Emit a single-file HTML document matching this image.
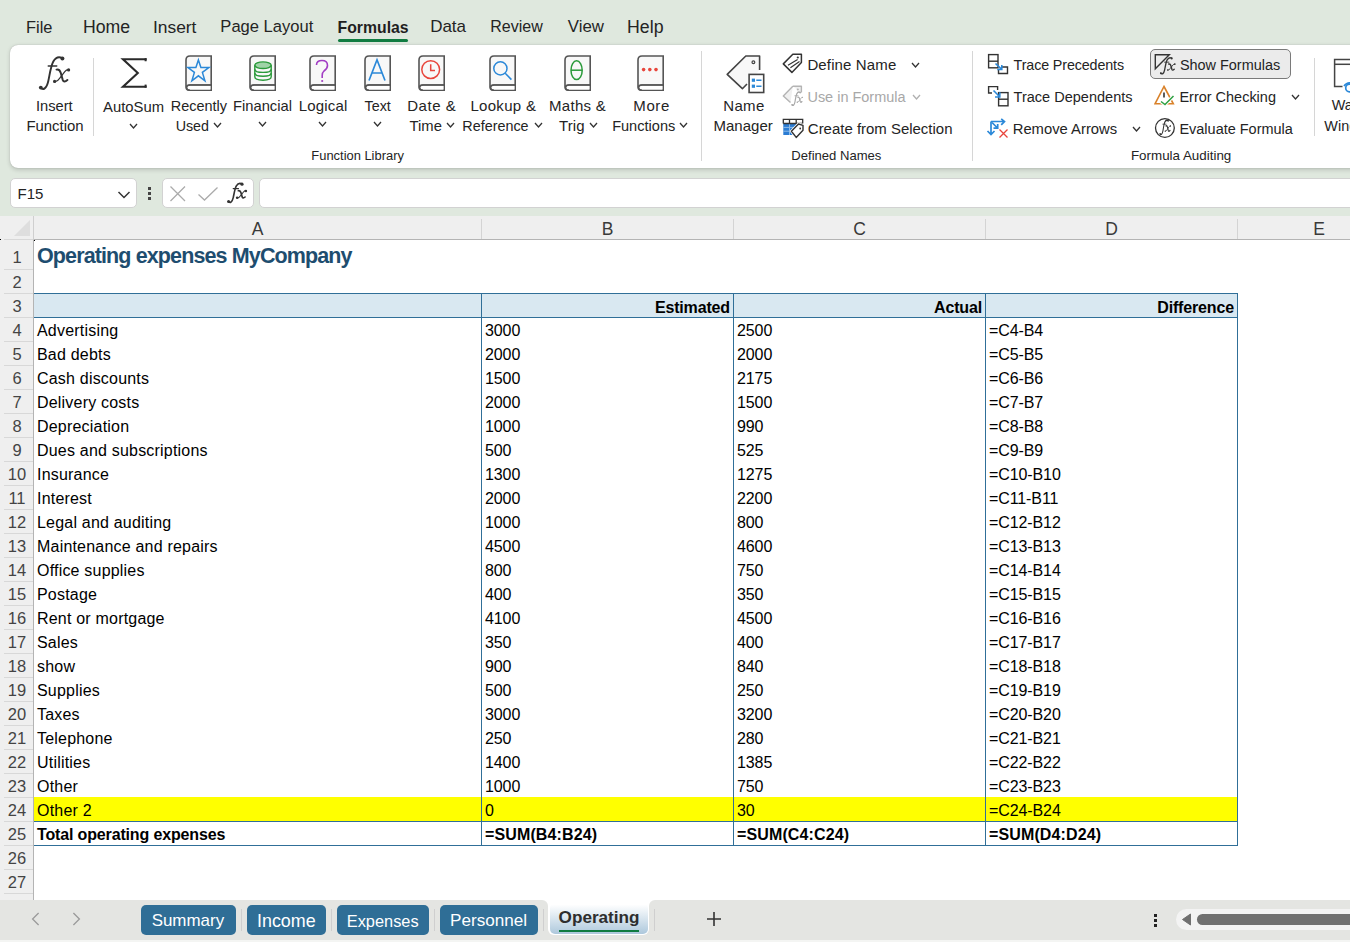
<!DOCTYPE html>
<html><head><meta charset="utf-8"><style>
*{box-sizing:border-box;margin:0;padding:0}
html,body{width:1350px;height:942px;overflow:hidden}
body{position:relative;background:#dfe8de;font-family:"Liberation Sans",sans-serif;color:#242424}
.a{position:absolute;white-space:nowrap}
.menu{position:absolute;top:18px;font-size:16.3px;color:#242424;line-height:18px;white-space:nowrap}
.ribbon{position:absolute;left:10px;top:45px;width:1400px;height:123px;background:#fff;border-radius:8px;box-shadow:0 0 1px rgba(0,0,0,.25),0 1.5px 4px rgba(0,0,0,.16)}
.rt{position:absolute;font-size:14.5px;line-height:20px;color:#242424;text-align:center;white-space:nowrap}
.gl{position:absolute;font-size:12.8px;color:#242424;line-height:14px;white-space:nowrap}
.sep{position:absolute;width:1px;background:#d6d6d6}
.st{position:absolute;font-size:14.5px;line-height:16px;color:#242424;white-space:nowrap}
#fbar{position:absolute;left:0;top:168px;width:1350px;height:48px;background:#dfe8de}
.box{position:absolute;background:#fff;border:1px solid #d2d2d2;border-radius:5px}
#colhdr{position:absolute;left:0;top:216px;width:1350px;height:24px;background:#efefef}
#colhdrline{position:absolute;left:33px;top:239px;width:1317px;height:1px;background:#b4b4b4}
#rowhdr{position:absolute;left:0;top:240px;width:34px;height:660px;background:#efefef;border-right:1px solid #b4b4b4}
.ch{position:absolute;top:217px;height:22px;font-size:17.5px;line-height:24px;color:#3a3a3a;text-align:center}
.cs{position:absolute;top:219px;width:1px;height:20px;background:#d4d4d4}
.rh{position:absolute;left:0;width:33px;font-size:16.5px;color:#444;text-align:center;padding-left:1px}
.rs{position:absolute;left:4px;width:29px;height:1px;background:#d8d8d8}
#grid{position:absolute;left:34px;top:240px;width:1316px;height:660px;background:#fff}
.c{position:absolute;font-size:16px;line-height:24px;color:#000;white-space:nowrap;letter-spacing:0.2px}
.b{font-weight:700;letter-spacing:-0.15px}
.n{letter-spacing:-0.1px}
#tabs{position:absolute;left:0;top:900px;width:1350px;height:40px;background:#e4e5e2}
.tab{position:absolute;top:905px;height:30px;background:#2f6e96;color:#fff;border-radius:5px;font-size:16.7px;line-height:30px;text-align:center;white-space:nowrap}

</style></head><body>
<div style="position:absolute;left:26.09px;top:17.32px;font-size:16.38px;letter-spacing:0.000px;line-height:20px;color:#242424;font-weight:400;white-space:nowrap">File</div>
<div style="position:absolute;left:82.99px;top:16.87px;font-size:17.68px;letter-spacing:0.000px;line-height:20px;color:#242424;font-weight:400;white-space:nowrap">Home</div>
<div style="position:absolute;left:152.93px;top:16.96px;font-size:17.42px;letter-spacing:0.000px;line-height:20px;color:#242424;font-weight:400;white-space:nowrap">Insert</div>
<div style="position:absolute;left:220.37px;top:17.26px;font-size:16.56px;letter-spacing:0.000px;line-height:20px;color:#242424;font-weight:400;white-space:nowrap">Page Layout</div>
<div style="position:absolute;left:430.14px;top:17.11px;font-size:17.00px;letter-spacing:0.000px;line-height:20px;color:#242424;font-weight:400;white-space:nowrap">Data</div>
<div style="position:absolute;left:490.22px;top:17.45px;font-size:16.00px;letter-spacing:0.000px;line-height:20px;color:#242424;font-weight:400;white-space:nowrap">Review</div>
<div style="position:absolute;left:567.83px;top:17.17px;font-size:16.82px;letter-spacing:0.000px;line-height:20px;color:#242424;font-weight:400;white-space:nowrap">View</div>
<div style="position:absolute;left:627.08px;top:16.85px;font-size:17.72px;letter-spacing:0.000px;line-height:20px;color:#242424;font-weight:400;white-space:nowrap">Help</div>
<div style="position:absolute;left:337.59px;top:17.83px;font-size:15.79px;letter-spacing:0.000px;line-height:20px;color:#1f1f1f;font-weight:700;white-space:nowrap">Formulas</div>
<div style="position:absolute;left:338px;top:39px;width:70px;height:3px;background:#107c41;border-radius:2px"></div>
<div class="ribbon"></div>
<svg style="position:absolute;left:35px;top:50px" width="40" height="45"><g fill="none" stroke="#333" stroke-linecap="round"><path d="M5.5 37.6 C8 40.5, 11.5 39, 13.3 31 C14.8 24, 15.8 16, 18.3 11.5 C20.3 8, 23.5 6.2, 27.2 8" stroke-width="1.9"/><path d="M13.2 16 H21.8" stroke-width="1.3"/><path d="M21.5 19.6 Q24.6 18.8, 25.8 23 L27.7 29.8 Q29 33.2, 32.4 30" stroke-width="2"/><path d="M19.6 31.6 Q22 32.2, 24.6 28.4 L29.8 21.6 Q31.6 19.4, 33.8 19.7" stroke-width="1.2"/></g><g fill="#333"><circle cx="5.8" cy="37.6" r="1.9"/><circle cx="27.4" cy="8.6" r="2"/><circle cx="19.6" cy="31.4" r="1.6"/><circle cx="33.6" cy="19.9" r="1.6"/></g></svg>
<div style="position:absolute;left:35.98px;top:95.91px;font-size:14.67px;letter-spacing:0.000px;line-height:20px;color:#242424;font-weight:400;white-space:nowrap">Insert</div>
<div style="position:absolute;left:26.41px;top:115.52px;font-size:14.93px;letter-spacing:0.000px;line-height:20px;color:#242424;font-weight:400;white-space:nowrap">Function</div>
<div class="sep" style="left:93px;top:58px;height:78px"></div>
<svg style="position:absolute;left:120px;top:57px" width="29" height="33"><path d="M26.6 2.2 H3 L17.8 16 L3 29.7 H26.6" fill="none" stroke="#2a2a2a" stroke-width="2.1" stroke-linejoin="miter" stroke-miterlimit="10"/><rect x="24.6" y="1.15" width="2" height="3.1" fill="#2a2a2a"/><rect x="24.6" y="27.6" width="2" height="3.1" fill="#2a2a2a"/></svg>
<div style="position:absolute;left:103.10px;top:96.85px;font-size:14.84px;letter-spacing:0.000px;line-height:20px;color:#242424;font-weight:400;white-space:nowrap">AutoSum</div>
<svg style="position:absolute;left:129px;top:123px" width="9" height="6"><path d="M1 1 L4.5 5 L8 1" fill="none" stroke="#333" stroke-width="1.3"/></svg>
<svg style="position:absolute;left:185px;top:55px" width="28" height="37" viewBox="0 0 28 37"><path d="M26.2 1 H5 Q1 1 1 5 V31.5 Q1 35.3 5 35.3 H26.2 Z" fill="#f8f8f8" stroke="#555" stroke-width="1.6"/><path d="M26.2 30 H5 Q1.5 30 1.5 32.7" fill="none" stroke="#555" stroke-width="1.6"/><rect x="1.8" y="30.8" width="23.6" height="3.7" fill="#fff"/><path d="M26.2 30 H5 Q1.6 30 1.6 32.6 Q1.6 35.3 5 35.3" fill="none" stroke="#555" stroke-width="1.6"/><path d="M13.4 5 L15.9 12.6 L23.9 12.6 L17.4 17.4 L19.9 25.8 L13.4 20.8 L6.9 25.8 L9.4 17.4 L2.9 12.6 L10.9 12.6 Z" fill="none" stroke="#2b88d8" stroke-width="1.5" stroke-linejoin="miter"/></svg>
<div style="position:absolute;left:170.74px;top:95.98px;font-size:14.46px;letter-spacing:0.000px;line-height:20px;color:#242424;font-weight:400;white-space:nowrap">Recently</div>
<div style="position:absolute;left:175.76px;top:115.74px;font-size:14.30px;letter-spacing:-0.072px;line-height:20px;color:#242424;font-weight:400;white-space:nowrap">Used</div>
<svg style="position:absolute;left:213px;top:121.6px" width="9" height="6"><path d="M1 1 L4.5 5 L8 1" fill="none" stroke="#333" stroke-width="1.3"/></svg>
<svg style="position:absolute;left:249px;top:55px" width="28" height="37" viewBox="0 0 28 37"><path d="M26.2 1 H5 Q1 1 1 5 V31.5 Q1 35.3 5 35.3 H26.2 Z" fill="#f8f8f8" stroke="#555" stroke-width="1.6"/><path d="M26.2 30 H5 Q1.5 30 1.5 32.7" fill="none" stroke="#555" stroke-width="1.6"/><rect x="1.8" y="30.8" width="23.6" height="3.7" fill="#fff"/><path d="M26.2 30 H5 Q1.6 30 1.6 32.6 Q1.6 35.3 5 35.3" fill="none" stroke="#555" stroke-width="1.6"/><g fill="none" stroke="#2a9a3a" stroke-width="1.4"><ellipse cx="14" cy="10.2" rx="8.2" ry="3.3" fill="#9fd3a7"/><path d="M5.8 10.2 V21.8 Q5.8 25.2 14 25.2 Q22.2 25.2 22.2 21.8 V10.2"/><path d="M5.8 14.2 Q5.8 17.4 14 17.4 Q22.2 17.4 22.2 14.2"/><path d="M5.8 18.1 Q5.8 21.3 14 21.3 Q22.2 21.3 22.2 18.1"/></g></svg>
<div style="position:absolute;left:233.02px;top:95.89px;font-size:14.74px;letter-spacing:0.000px;line-height:20px;color:#242424;font-weight:400;white-space:nowrap">Financial</div>
<svg style="position:absolute;left:258px;top:121.3px" width="9" height="6"><path d="M1 1 L4.5 5 L8 1" fill="none" stroke="#333" stroke-width="1.3"/></svg>
<svg style="position:absolute;left:309px;top:55px" width="28" height="37" viewBox="0 0 28 37"><path d="M26.2 1 H5 Q1 1 1 5 V31.5 Q1 35.3 5 35.3 H26.2 Z" fill="#f8f8f8" stroke="#555" stroke-width="1.6"/><path d="M26.2 30 H5 Q1.5 30 1.5 32.7" fill="none" stroke="#555" stroke-width="1.6"/><rect x="1.8" y="30.8" width="23.6" height="3.7" fill="#fff"/><path d="M26.2 30 H5 Q1.6 30 1.6 32.6 Q1.6 35.3 5 35.3" fill="none" stroke="#555" stroke-width="1.6"/><path d="M7.5 10 Q7.5 5.5 13 5.5 Q18.5 5.5 18.5 10.5 Q18.5 13.5 15 16 Q13.2 17.5 13.2 20.5 V23" fill="none" stroke="#a23ec4" stroke-width="1.6"/><circle cx="13.2" cy="26" r="1.1" fill="#a23ec4"/></svg>
<div style="position:absolute;left:298.80px;top:95.80px;font-size:15.00px;letter-spacing:0.150px;line-height:20px;color:#242424;font-weight:400;white-space:nowrap">Logical</div>
<svg style="position:absolute;left:318px;top:121.3px" width="9" height="6"><path d="M1 1 L4.5 5 L8 1" fill="none" stroke="#333" stroke-width="1.3"/></svg>
<svg style="position:absolute;left:364px;top:55px" width="28" height="37" viewBox="0 0 28 37"><path d="M26.2 1 H5 Q1 1 1 5 V31.5 Q1 35.3 5 35.3 H26.2 Z" fill="#f8f8f8" stroke="#555" stroke-width="1.6"/><path d="M26.2 30 H5 Q1.5 30 1.5 32.7" fill="none" stroke="#555" stroke-width="1.6"/><rect x="1.8" y="30.8" width="23.6" height="3.7" fill="#fff"/><path d="M26.2 30 H5 Q1.6 30 1.6 32.6 Q1.6 35.3 5 35.3" fill="none" stroke="#555" stroke-width="1.6"/><path d="M5 25.5 L13 4.8 L21 25.5 M8 18 H18" fill="none" stroke="#2b88d8" stroke-width="1.7"/></svg>
<div style="position:absolute;left:364.61px;top:96.04px;font-size:14.30px;letter-spacing:-0.028px;line-height:20px;color:#242424;font-weight:400;white-space:nowrap">Text</div>
<svg style="position:absolute;left:373px;top:121.3px" width="9" height="6"><path d="M1 1 L4.5 5 L8 1" fill="none" stroke="#333" stroke-width="1.3"/></svg>
<svg style="position:absolute;left:418px;top:55px" width="28" height="37" viewBox="0 0 28 37"><path d="M26.2 1 H5 Q1 1 1 5 V31.5 Q1 35.3 5 35.3 H26.2 Z" fill="#f8f8f8" stroke="#555" stroke-width="1.6"/><path d="M26.2 30 H5 Q1.5 30 1.5 32.7" fill="none" stroke="#555" stroke-width="1.6"/><rect x="1.8" y="30.8" width="23.6" height="3.7" fill="#fff"/><path d="M26.2 30 H5 Q1.6 30 1.6 32.6 Q1.6 35.3 5 35.3" fill="none" stroke="#555" stroke-width="1.6"/><circle cx="12.7" cy="14.6" r="8.9" fill="none" stroke="#e8453c" stroke-width="1.5"/><path d="M12.7 9.2 V15.5 H17" fill="none" stroke="#e8453c" stroke-width="1.5"/></svg>
<div style="position:absolute;left:407.20px;top:95.80px;font-size:15.00px;letter-spacing:0.560px;line-height:20px;color:#242424;font-weight:400;white-space:nowrap">Date &amp;</div>
<div style="position:absolute;left:409.60px;top:115.56px;font-size:14.81px;letter-spacing:0.000px;line-height:20px;color:#242424;font-weight:400;white-space:nowrap">Time</div>
<svg style="position:absolute;left:446px;top:121.6px" width="9" height="6"><path d="M1 1 L4.5 5 L8 1" fill="none" stroke="#333" stroke-width="1.3"/></svg>
<svg style="position:absolute;left:489px;top:55px" width="28" height="37" viewBox="0 0 28 37"><path d="M26.2 1 H5 Q1 1 1 5 V31.5 Q1 35.3 5 35.3 H26.2 Z" fill="#f8f8f8" stroke="#555" stroke-width="1.6"/><path d="M26.2 30 H5 Q1.5 30 1.5 32.7" fill="none" stroke="#555" stroke-width="1.6"/><rect x="1.8" y="30.8" width="23.6" height="3.7" fill="#fff"/><path d="M26.2 30 H5 Q1.6 30 1.6 32.6 Q1.6 35.3 5 35.3" fill="none" stroke="#555" stroke-width="1.6"/><circle cx="11.4" cy="13.4" r="6.6" fill="none" stroke="#2b88d8" stroke-width="1.5"/><path d="M16.2 18.2 L22.4 24.6" stroke="#2b88d8" stroke-width="1.6"/></svg>
<div style="position:absolute;left:470.40px;top:95.80px;font-size:15.00px;letter-spacing:0.307px;line-height:20px;color:#242424;font-weight:400;white-space:nowrap">Lookup &amp;</div>
<div style="position:absolute;left:462.35px;top:115.72px;font-size:14.37px;letter-spacing:0.000px;line-height:20px;color:#242424;font-weight:400;white-space:nowrap">Reference</div>
<svg style="position:absolute;left:534px;top:121.6px" width="9" height="6"><path d="M1 1 L4.5 5 L8 1" fill="none" stroke="#333" stroke-width="1.3"/></svg>
<svg style="position:absolute;left:564px;top:55px" width="28" height="37" viewBox="0 0 28 37"><path d="M26.2 1 H5 Q1 1 1 5 V31.5 Q1 35.3 5 35.3 H26.2 Z" fill="#f8f8f8" stroke="#555" stroke-width="1.6"/><path d="M26.2 30 H5 Q1.5 30 1.5 32.7" fill="none" stroke="#555" stroke-width="1.6"/><rect x="1.8" y="30.8" width="23.6" height="3.7" fill="#fff"/><path d="M26.2 30 H5 Q1.6 30 1.6 32.6 Q1.6 35.3 5 35.3" fill="none" stroke="#555" stroke-width="1.6"/><ellipse cx="12.6" cy="15.2" rx="5.6" ry="9.4" fill="none" stroke="#2a9a3a" stroke-width="1.5"/><path d="M7 15.2 H18.2" stroke="#2a9a3a" stroke-width="1.5"/></svg>
<div style="position:absolute;left:549.00px;top:95.80px;font-size:15.00px;letter-spacing:0.308px;line-height:20px;color:#242424;font-weight:400;white-space:nowrap">Maths &amp;</div>
<div style="position:absolute;left:559.10px;top:115.50px;font-size:15.00px;letter-spacing:0.033px;line-height:20px;color:#242424;font-weight:400;white-space:nowrap">Trig</div>
<svg style="position:absolute;left:589px;top:121.6px" width="9" height="6"><path d="M1 1 L4.5 5 L8 1" fill="none" stroke="#333" stroke-width="1.3"/></svg>
<svg style="position:absolute;left:637px;top:55px" width="28" height="37" viewBox="0 0 28 37"><path d="M26.2 1 H5 Q1 1 1 5 V31.5 Q1 35.3 5 35.3 H26.2 Z" fill="#f8f8f8" stroke="#555" stroke-width="1.6"/><path d="M26.2 30 H5 Q1.5 30 1.5 32.7" fill="none" stroke="#555" stroke-width="1.6"/><rect x="1.8" y="30.8" width="23.6" height="3.7" fill="#fff"/><path d="M26.2 30 H5 Q1.6 30 1.6 32.6 Q1.6 35.3 5 35.3" fill="none" stroke="#555" stroke-width="1.6"/><g fill="#e8453c"><circle cx="6.6" cy="14.6" r="1.8"/><circle cx="12.8" cy="14.6" r="1.8"/><circle cx="19" cy="14.6" r="1.8"/></g></svg>
<div style="position:absolute;left:633.30px;top:95.80px;font-size:15.00px;letter-spacing:0.617px;line-height:20px;color:#242424;font-weight:400;white-space:nowrap">More</div>
<div style="position:absolute;left:612.13px;top:115.65px;font-size:14.57px;letter-spacing:0.000px;line-height:20px;color:#242424;font-weight:400;white-space:nowrap">Functions</div>
<svg style="position:absolute;left:679px;top:121.6px" width="9" height="6"><path d="M1 1 L4.5 5 L8 1" fill="none" stroke="#333" stroke-width="1.3"/></svg>
<div style="position:absolute;left:311.37px;top:146.12px;font-size:12.92px;letter-spacing:0.000px;line-height:20px;color:#242424;font-weight:400;white-space:nowrap">Function Library</div>
<div class="sep" style="left:701px;top:51px;height:110px"></div>
<svg style="position:absolute;left:725px;top:53px" width="42" height="42"><path d="M34.6 17 V3 H20.8 L2.2 21.4 L17.4 35.7 L22 31" fill="#f8f8f8" stroke="#444" stroke-width="1.6" stroke-linejoin="round"/><circle cx="28.4" cy="9.2" r="1.4" fill="none" stroke="#444" stroke-width="1.2"/><rect x="24.1" y="21.4" width="14.6" height="18.1" fill="#fff" stroke="#444" stroke-width="1.6"/><rect x="26.8" y="25.6" width="3.2" height="3.2" fill="#2b88d8"/><rect x="26.8" y="31.6" width="3.2" height="3.2" fill="#2b88d8"/><path d="M31.3 27.2 H36.5 M31.3 33.2 H36.5" stroke="#2b88d8" stroke-width="1.4"/></svg>
<div style="position:absolute;left:723.20px;top:95.80px;font-size:15.00px;letter-spacing:0.367px;line-height:20px;color:#242424;font-weight:400;white-space:nowrap">Name</div>
<div style="position:absolute;left:713.40px;top:115.80px;font-size:15.00px;letter-spacing:0.042px;line-height:20px;color:#242424;font-weight:400;white-space:nowrap">Manager</div>
<svg style="position:absolute;left:782px;top:53px" width="22" height="21"><path d="M10.8 1.3 H19.4 V9.4 L9.9 19.4 L1.3 10.9 Z" fill="#fff" stroke="#333" stroke-width="1.5" stroke-linejoin="round"/><circle cx="15.8" cy="4.5" r="1.1" fill="#333"/><path d="M6 12.3 L15.6 6.6 M8.4 14.7 L17.5 8.5" stroke="#333" stroke-width="1.2"/></svg>
<div style="position:absolute;left:807.40px;top:54.80px;font-size:15.00px;letter-spacing:0.135px;line-height:20px;color:#242424;font-weight:400;white-space:nowrap">Define Name</div>
<svg style="position:absolute;left:911px;top:61.5px" width="9" height="6"><path d="M1 1 L4.5 5 L8 1" fill="none" stroke="#333" stroke-width="1.3"/></svg>
<svg style="position:absolute;left:782px;top:85px" width="22" height="22"><path d="M10.8 1.3 H19.4 V7.5 M8.5 17.5 L1.3 10.9 L10.8 1.3" fill="#f0f0f0" stroke="#b4b4b4" stroke-width="1.4" stroke-linejoin="round"/><circle cx="15.8" cy="4.5" r="1.1" fill="#b4b4b4"/></svg>
<svg style="position:absolute;left:790.30px;top:89.20px" width="17" height="21"><g transform="scale(0.37,0.42)"><g fill="none" stroke="#a8a8a8" stroke-linecap="round"><path d="M5.5 37.6 C8 40.5, 11.5 39, 13.3 31 C14.8 24, 15.8 16, 18.3 11.5 C20.3 8, 23.5 6.2, 27.2 8" stroke-width="3.08"/><path d="M13.2 16 H21.8" stroke-width="2.11"/><path d="M21.5 19.6 Q24.6 18.8, 25.8 23 L27.7 29.8 Q29 33.2, 32.4 30" stroke-width="3.24"/><path d="M19.6 31.6 Q22 32.2, 24.6 28.4 L29.8 21.6 Q31.6 19.4, 33.8 19.7" stroke-width="1.95"/></g><g fill="#a8a8a8"><circle cx="5.8" cy="37.6" r="2.05"/><circle cx="27.4" cy="8.6" r="2.16"/><circle cx="19.6" cy="31.4" r="1.73"/><circle cx="33.6" cy="19.9" r="1.73"/></g></g></svg>
<div style="position:absolute;left:807.44px;top:86.98px;font-size:14.48px;letter-spacing:0.000px;line-height:20px;color:#a8a8a8;font-weight:400;white-space:nowrap">Use in Formula</div>
<svg style="position:absolute;left:912px;top:93.5px" width="9" height="6"><path d="M1 1 L4.5 5 L8 1" fill="none" stroke="#b0b0b0" stroke-width="1.3"/></svg>
<svg style="position:absolute;left:782px;top:118px" width="23" height="21"><rect x="1.3" y="5.5" width="13" height="11.5" fill="#2b7cd3"/><path d="M1.3 9.4 H14.3 M1.3 13.2 H14.3 M7.5 5.5 V17" stroke="#8fbce9" stroke-width="1"/><g fill="none" stroke="#333" stroke-width="1.3"><path d="M1.3 5.5 V1.3 H20.7 V5.5 M1.3 5.5 H20.7 M7.5 1.3 V5.5 M14.2 1.3 V5.5"/></g><path d="M9.4 13.2 L16.5 6 L21 7.4 V12.2 L14.2 19.4 Z" fill="#fff" stroke="#fff" stroke-width="3" stroke-linejoin="round"/><path d="M9.4 13.2 L16.5 6 L21 7.4 V12.2 L14.2 19.4 Z" fill="#fff" stroke="#333" stroke-width="1.4" stroke-linejoin="round"/><circle cx="18.2" cy="10.5" r="0.9" fill="#333"/></svg>
<div style="position:absolute;left:807.85px;top:118.81px;font-size:14.96px;letter-spacing:0.000px;line-height:20px;color:#242424;font-weight:400;white-space:nowrap">Create from Selection</div>
<div style="position:absolute;left:791.35px;top:146.07px;font-size:13.07px;letter-spacing:0.000px;line-height:20px;color:#242424;font-weight:400;white-space:nowrap">Defined Names</div>
<div class="sep" style="left:972px;top:51px;height:110px"></div>
<svg style="position:absolute;left:987px;top:53px" width="22" height="22"><g fill="none" stroke="#333" stroke-width="1.4"><rect x="1.6" y="1.6" width="9.4" height="13.2"/><path d="M1.6 8.2 H11"/><path d="M14 14 H20.5 V20.5 H11.5 V17"/></g><path d="M8.5 10.5 L14.5 16.2 M10.2 16.5 H14.8 V12" fill="none" stroke="#2b88d8" stroke-width="1.6"/></svg>
<div style="position:absolute;left:1013.61px;top:55.04px;font-size:14.30px;letter-spacing:-0.123px;line-height:20px;color:#242424;font-weight:400;white-space:nowrap">Trace Precedents</div>
<svg style="position:absolute;left:987px;top:85px" width="22" height="22"><g fill="none" stroke="#333" stroke-width="1.4"><path d="M5 8 H1.6 V1.6 H10.6 V5"/><rect x="11.6" y="7.6" width="9.4" height="13.2"/><path d="M11.6 14.2 H21"/></g><path d="M6.5 5.5 L12.5 11.5 M8 12 H12.8 V7.2" fill="none" stroke="#2b88d8" stroke-width="1.6"/></svg>
<div style="position:absolute;left:1013.61px;top:86.96px;font-size:14.53px;letter-spacing:0.000px;line-height:20px;color:#242424;font-weight:400;white-space:nowrap">Trace Dependents</div>
<svg style="position:absolute;left:986px;top:118px" width="24" height="22"><g fill="none" stroke="#2b88d8" stroke-width="1.7"><path d="M5 3.5 V16.5 M1.5 13 L5 16.5 L8.5 13"/><path d="M5 3.5 H18.5 M15.2 0.8 L18.5 3.5 L15.2 6.8"/><path d="M6 4.5 L11.5 10 M7.5 10.2 H11.7 V6"/></g><path d="M13.5 11.5 L21.5 19.5 M21.5 11.5 L13.5 19.5" stroke="#e8453c" stroke-width="1.3"/></svg>
<div style="position:absolute;left:1012.71px;top:118.86px;font-size:14.81px;letter-spacing:0.000px;line-height:20px;color:#242424;font-weight:400;white-space:nowrap">Remove Arrows</div>
<svg style="position:absolute;left:1132px;top:125.5px" width="9" height="6"><path d="M1 1 L4.5 5 L8 1" fill="none" stroke="#333" stroke-width="1.3"/></svg>
<div style="position:absolute;left:1150px;top:49px;width:141px;height:30px;background:#ebebeb;border:1px solid #7a7a7a;border-radius:5px"></div>
<svg style="position:absolute;left:1154px;top:53px" width="24" height="23"><path d="M1.3 1.8 H15.3 L1.3 15.8 Z" fill="none" stroke="#333" stroke-width="1.4" stroke-linejoin="miter"/></svg>
<svg style="position:absolute;left:1158.40px;top:53.60px" width="22" height="25"><g transform="scale(0.5,0.51)"><g fill="none" stroke="#333" stroke-linecap="round"><path d="M5.5 37.6 C8 40.5, 11.5 39, 13.3 31 C14.8 24, 15.8 16, 18.3 11.5 C20.3 8, 23.5 6.2, 27.2 8" stroke-width="2.66"/><path d="M13.2 16 H21.8" stroke-width="1.82"/><path d="M21.5 19.6 Q24.6 18.8, 25.8 23 L27.7 29.8 Q29 33.2, 32.4 30" stroke-width="2.80"/><path d="M19.6 31.6 Q22 32.2, 24.6 28.4 L29.8 21.6 Q31.6 19.4, 33.8 19.7" stroke-width="1.68"/></g><g fill="#333"><circle cx="5.8" cy="37.6" r="1.90"/><circle cx="27.4" cy="8.6" r="2.00"/><circle cx="19.6" cy="31.4" r="1.60"/><circle cx="33.6" cy="19.9" r="1.60"/></g></g></svg>
<div style="position:absolute;left:1179.88px;top:54.99px;font-size:14.45px;letter-spacing:0.000px;line-height:20px;color:#242424;font-weight:400;white-space:nowrap">Show Formulas</div>
<svg style="position:absolute;left:1154px;top:85px" width="22" height="21"><path d="M10 1.5 L19.3 18.8 H1 Z" fill="#fff" stroke="#d9822b" stroke-width="1.6" stroke-linejoin="miter"/><path d="M10 7.5 V12.5" stroke="#333" stroke-width="1.6"/><path d="M7 16.5 L11 19.5 L19.5 11" fill="none" stroke="#fff" stroke-width="3.5"/><path d="M7 16.5 L11 19.5 L19.5 11" fill="none" stroke="#2ea043" stroke-width="1.5"/></svg>
<div style="position:absolute;left:1179.44px;top:86.98px;font-size:14.48px;letter-spacing:0.000px;line-height:20px;color:#242424;font-weight:400;white-space:nowrap">Error Checking</div>
<svg style="position:absolute;left:1291px;top:93.5px" width="9" height="6"><path d="M1 1 L4.5 5 L8 1" fill="none" stroke="#333" stroke-width="1.3"/></svg>
<svg style="position:absolute;left:1154px;top:117px" width="22" height="22"><circle cx="10.9" cy="11" r="9.4" fill="none" stroke="#333" stroke-width="1.3"/></svg>
<svg style="position:absolute;left:1158.10px;top:117.30px" width="17" height="22"><g transform="scale(0.37,0.45)"><g fill="none" stroke="#333" stroke-linecap="round"><path d="M5.5 37.6 C8 40.5, 11.5 39, 13.3 31 C14.8 24, 15.8 16, 18.3 11.5 C20.3 8, 23.5 6.2, 27.2 8" stroke-width="2.82"/><path d="M13.2 16 H21.8" stroke-width="1.93"/><path d="M21.5 19.6 Q24.6 18.8, 25.8 23 L27.7 29.8 Q29 33.2, 32.4 30" stroke-width="2.97"/><path d="M19.6 31.6 Q22 32.2, 24.6 28.4 L29.8 21.6 Q31.6 19.4, 33.8 19.7" stroke-width="1.78"/></g><g fill="#333"><circle cx="5.8" cy="37.6" r="1.80"/><circle cx="27.4" cy="8.6" r="1.89"/><circle cx="19.6" cy="31.4" r="1.51"/><circle cx="33.6" cy="19.9" r="1.51"/></g></g></svg>
<div style="position:absolute;left:1179.44px;top:118.98px;font-size:14.48px;letter-spacing:0.000px;line-height:20px;color:#242424;font-weight:400;white-space:nowrap">Evaluate Formula</div>
<div style="position:absolute;left:1130.93px;top:145.66px;font-size:13.38px;letter-spacing:0.000px;line-height:20px;color:#242424;font-weight:400;white-space:nowrap">Formula Auditing</div>
<div class="sep" style="left:1314px;top:58px;height:78px"></div>
<svg style="position:absolute;left:1333px;top:58px" width="20" height="36"><path d="M20 1.6 H1.6 V28.5 H9.5" fill="none" stroke="#444" stroke-width="1.5"/><path d="M1.6 6.3 H20" stroke="#444" stroke-width="1.5"/><path d="M11 28 Q14 24 18 25" fill="none" stroke="#2b88d8" stroke-width="1.7"/><circle cx="16.5" cy="30" r="3.8" fill="none" stroke="#2b88d8" stroke-width="1.7"/></svg>
<div style="position:absolute;left:1331.66px;top:95.01px;font-size:14.40px;letter-spacing:0.000px;line-height:20px;color:#242424;font-weight:400;white-space:nowrap">Watch</div>
<div style="position:absolute;left:1324.36px;top:115.71px;font-size:14.40px;letter-spacing:0.000px;line-height:20px;color:#242424;font-weight:400;white-space:nowrap">Window</div>

<div class="box" style="left:10px;top:178px;width:127px;height:30px"></div>
<div style="position:absolute;left:17.5px;top:185px;font-size:15px;line-height:18px;color:#242424">F15</div>
<svg style="position:absolute;left:117px;top:190px" width="15" height="10"><path d="M1.5 2 L7 7.5 L12.5 2" fill="none" stroke="#333" stroke-width="1.5"/></svg>
<svg style="position:absolute;left:147px;top:186px" width="6" height="15"><g fill="#444"><rect x="1" y="1" width="3" height="3"/><rect x="1" y="6" width="3" height="3"/><rect x="1" y="11" width="3" height="3"/></g></svg>
<div class="box" style="left:162px;top:178px;width:92px;height:30px"></div>
<svg style="position:absolute;left:169px;top:185px" width="18" height="17"><path d="M1.5 1.5 L16 16 M16 1.5 L1.5 16" stroke="#ababab" stroke-width="1.3"/></svg>
<svg style="position:absolute;left:197px;top:186px" width="22" height="16"><path d="M1.5 8.5 L7.5 14 L20.5 1.5" fill="none" stroke="#ababab" stroke-width="1.3"/></svg>
<svg style="position:absolute;left:225px;top:179px" width="26" height="28"><g transform="scale(0.62,0.6)"><g fill="none" stroke="#333" stroke-linecap="round">
<path d="M5.5 37.6 C8 40.5, 11.5 39, 13.3 31 C14.8 24, 15.8 16, 18.3 11.5 C20.3 8, 23.5 6.2, 27.2 8" stroke-width="2.6"/>
<path d="M13.2 16 H21.8" stroke-width="1.8"/>
<path d="M21.5 19.6 Q24.6 18.8, 25.8 23 L27.7 29.8 Q29 33.2, 32.4 30" stroke-width="2.7"/>
<path d="M19.6 31.6 Q22 32.2, 24.6 28.4 L29.8 21.6 Q31.6 19.4, 33.8 19.7" stroke-width="1.7"/></g>
<g fill="#333"><circle cx="5.8" cy="37.6" r="2.5"/><circle cx="27.4" cy="8.6" r="2.6"/><circle cx="19.6" cy="31.4" r="2.1"/><circle cx="33.6" cy="19.9" r="2.1"/></g></g></svg>
<div class="box" style="left:259px;top:178px;width:1100px;height:30px"></div>
<div id="colhdr"></div><div id="rowhdr"></div><div id="grid"></div><div id="colhdrline"></div>
<div class="a" style="left:4px;top:239px;width:29px;height:1px;background:#d8d8d8"></div><div class="a" style="left:33px;top:216px;width:1px;height:24px;background:#cfcfcf"></div>
<svg class="a" style="left:14px;top:220px" width="17" height="16"><path d="M16 0 L16 16 L0 16 Z" fill="#dedede"/></svg>
<div class="ch" style="left:34px;width:447px">A</div><div class="cs" style="left:481px"></div><div class="ch" style="left:482px;width:251px">B</div><div class="cs" style="left:733px"></div><div class="ch" style="left:734px;width:251px">C</div><div class="cs" style="left:985px"></div><div class="ch" style="left:986px;width:251px">D</div><div class="cs" style="left:1237px"></div><div class="ch" style="left:1238px;width:162px">E</div>
<div class="rh" style="top:240px;height:29px;line-height:34px">1</div><div class="rs" style="top:269px"></div><div class="rh" style="top:270px;height:23px;line-height:25px">2</div><div class="rs" style="top:293px"></div><div class="rh" style="top:294px;height:23px;line-height:25px">3</div><div class="rs" style="top:317px"></div><div class="rh" style="top:318px;height:23px;line-height:25px">4</div><div class="rs" style="top:341px"></div><div class="rh" style="top:342px;height:23px;line-height:25px">5</div><div class="rs" style="top:365px"></div><div class="rh" style="top:366px;height:23px;line-height:25px">6</div><div class="rs" style="top:389px"></div><div class="rh" style="top:390px;height:23px;line-height:25px">7</div><div class="rs" style="top:413px"></div><div class="rh" style="top:414px;height:23px;line-height:25px">8</div><div class="rs" style="top:437px"></div><div class="rh" style="top:438px;height:23px;line-height:25px">9</div><div class="rs" style="top:461px"></div><div class="rh" style="top:462px;height:23px;line-height:25px">10</div><div class="rs" style="top:485px"></div><div class="rh" style="top:486px;height:23px;line-height:25px">11</div><div class="rs" style="top:509px"></div><div class="rh" style="top:510px;height:23px;line-height:25px">12</div><div class="rs" style="top:533px"></div><div class="rh" style="top:534px;height:23px;line-height:25px">13</div><div class="rs" style="top:557px"></div><div class="rh" style="top:558px;height:23px;line-height:25px">14</div><div class="rs" style="top:581px"></div><div class="rh" style="top:582px;height:23px;line-height:25px">15</div><div class="rs" style="top:605px"></div><div class="rh" style="top:606px;height:23px;line-height:25px">16</div><div class="rs" style="top:629px"></div><div class="rh" style="top:630px;height:23px;line-height:25px">17</div><div class="rs" style="top:653px"></div><div class="rh" style="top:654px;height:23px;line-height:25px">18</div><div class="rs" style="top:677px"></div><div class="rh" style="top:678px;height:23px;line-height:25px">19</div><div class="rs" style="top:701px"></div><div class="rh" style="top:702px;height:23px;line-height:25px">20</div><div class="rs" style="top:725px"></div><div class="rh" style="top:726px;height:23px;line-height:25px">21</div><div class="rs" style="top:749px"></div><div class="rh" style="top:750px;height:23px;line-height:25px">22</div><div class="rs" style="top:773px"></div><div class="rh" style="top:774px;height:23px;line-height:25px">23</div><div class="rs" style="top:797px"></div><div class="rh" style="top:798px;height:23px;line-height:25px">24</div><div class="rs" style="top:821px"></div><div class="rh" style="top:822px;height:23px;line-height:25px">25</div><div class="rs" style="top:845px"></div><div class="rh" style="top:846px;height:23px;line-height:25px">26</div><div class="rs" style="top:869px"></div><div class="rh" style="top:870px;height:23px;line-height:25px">27</div><div class="rs" style="top:893px"></div>
<div class="a" style="left:0;top:239px;width:1px;height:1px;background:#000"></div><div class="a" style="left:34px;top:240px;width:1px;height:1px;background:#000"></div>
<div class="c b" style="left:37px;top:241.5px;font-size:21.5px;letter-spacing:-0.88px;line-height:28px;color:#1e4d6f">Operating expenses MyCompany</div>
<div class="a" style="left:34px;top:294px;width:1203px;height:23px;background:#d9e8f1"></div>
<div class="a" style="left:34px;top:797px;width:1203px;height:24px;background:#ffff00"></div>
<div class="a" style="left:34px;top:293px;width:1204px;height:1px;background:#306f98"></div><div class="a" style="left:34px;top:317px;width:1204px;height:1px;background:#306f98"></div><div class="a" style="left:34px;top:821px;width:1204px;height:1px;background:#306f98"></div><div class="a" style="left:34px;top:845px;width:1204px;height:1px;background:#306f98"></div><div class="a" style="left:481px;top:293px;width:1px;height:553px;background:#306f98"></div><div class="a" style="left:733px;top:293px;width:1px;height:553px;background:#306f98"></div><div class="a" style="left:985px;top:293px;width:1px;height:553px;background:#306f98"></div><div class="a" style="left:1237px;top:293px;width:1px;height:553px;background:#306f98"></div>
<div class="c b" style="left:530px;width:200px;text-align:right;top:296px">Estimated</div><div class="c b" style="left:782px;width:200px;text-align:right;top:296px">Actual</div><div class="c b" style="left:1034px;width:200px;text-align:right;top:296px">Difference</div>
<div class="c" style="left:37px;top:319px">Advertising</div><div class="c n" style="left:485px;top:319px">3000</div><div class="c n" style="left:737px;top:319px">2500</div><div class="c n" style="left:989px;top:319px">=C4-B4</div>
<div class="c" style="left:37px;top:343px">Bad debts</div><div class="c n" style="left:485px;top:343px">2000</div><div class="c n" style="left:737px;top:343px">2000</div><div class="c n" style="left:989px;top:343px">=C5-B5</div>
<div class="c" style="left:37px;top:367px">Cash discounts</div><div class="c n" style="left:485px;top:367px">1500</div><div class="c n" style="left:737px;top:367px">2175</div><div class="c n" style="left:989px;top:367px">=C6-B6</div>
<div class="c" style="left:37px;top:391px">Delivery costs</div><div class="c n" style="left:485px;top:391px">2000</div><div class="c n" style="left:737px;top:391px">1500</div><div class="c n" style="left:989px;top:391px">=C7-B7</div>
<div class="c" style="left:37px;top:415px">Depreciation</div><div class="c n" style="left:485px;top:415px">1000</div><div class="c n" style="left:737px;top:415px">990</div><div class="c n" style="left:989px;top:415px">=C8-B8</div>
<div class="c" style="left:37px;top:439px">Dues and subscriptions</div><div class="c n" style="left:485px;top:439px">500</div><div class="c n" style="left:737px;top:439px">525</div><div class="c n" style="left:989px;top:439px">=C9-B9</div>
<div class="c" style="left:37px;top:463px">Insurance</div><div class="c n" style="left:485px;top:463px">1300</div><div class="c n" style="left:737px;top:463px">1275</div><div class="c n" style="left:989px;top:463px">=C10-B10</div>
<div class="c" style="left:37px;top:487px">Interest</div><div class="c n" style="left:485px;top:487px">2000</div><div class="c n" style="left:737px;top:487px">2200</div><div class="c n" style="left:989px;top:487px">=C11-B11</div>
<div class="c" style="left:37px;top:511px">Legal and auditing</div><div class="c n" style="left:485px;top:511px">1000</div><div class="c n" style="left:737px;top:511px">800</div><div class="c n" style="left:989px;top:511px">=C12-B12</div>
<div class="c" style="left:37px;top:535px">Maintenance and repairs</div><div class="c n" style="left:485px;top:535px">4500</div><div class="c n" style="left:737px;top:535px">4600</div><div class="c n" style="left:989px;top:535px">=C13-B13</div>
<div class="c" style="left:37px;top:559px">Office supplies</div><div class="c n" style="left:485px;top:559px">800</div><div class="c n" style="left:737px;top:559px">750</div><div class="c n" style="left:989px;top:559px">=C14-B14</div>
<div class="c" style="left:37px;top:583px">Postage</div><div class="c n" style="left:485px;top:583px">400</div><div class="c n" style="left:737px;top:583px">350</div><div class="c n" style="left:989px;top:583px">=C15-B15</div>
<div class="c" style="left:37px;top:607px">Rent or mortgage</div><div class="c n" style="left:485px;top:607px">4100</div><div class="c n" style="left:737px;top:607px">4500</div><div class="c n" style="left:989px;top:607px">=C16-B16</div>
<div class="c" style="left:37px;top:631px">Sales</div><div class="c n" style="left:485px;top:631px">350</div><div class="c n" style="left:737px;top:631px">400</div><div class="c n" style="left:989px;top:631px">=C17-B17</div>
<div class="c" style="left:37px;top:655px">show</div><div class="c n" style="left:485px;top:655px">900</div><div class="c n" style="left:737px;top:655px">840</div><div class="c n" style="left:989px;top:655px">=C18-B18</div>
<div class="c" style="left:37px;top:679px">Supplies</div><div class="c n" style="left:485px;top:679px">500</div><div class="c n" style="left:737px;top:679px">250</div><div class="c n" style="left:989px;top:679px">=C19-B19</div>
<div class="c" style="left:37px;top:703px">Taxes</div><div class="c n" style="left:485px;top:703px">3000</div><div class="c n" style="left:737px;top:703px">3200</div><div class="c n" style="left:989px;top:703px">=C20-B20</div>
<div class="c" style="left:37px;top:727px">Telephone</div><div class="c n" style="left:485px;top:727px">250</div><div class="c n" style="left:737px;top:727px">280</div><div class="c n" style="left:989px;top:727px">=C21-B21</div>
<div class="c" style="left:37px;top:751px">Utilities</div><div class="c n" style="left:485px;top:751px">1400</div><div class="c n" style="left:737px;top:751px">1385</div><div class="c n" style="left:989px;top:751px">=C22-B22</div>
<div class="c" style="left:37px;top:775px">Other</div><div class="c n" style="left:485px;top:775px">1000</div><div class="c n" style="left:737px;top:775px">750</div><div class="c n" style="left:989px;top:775px">=C23-B23</div>
<div class="c" style="left:37px;top:799px">Other 2</div><div class="c n" style="left:485px;top:799px">0</div><div class="c n" style="left:737px;top:799px">30</div><div class="c n" style="left:989px;top:799px">=C24-B24</div>
<div class="c b" style="left:37px;top:823px">Total operating expenses</div><div class="c b" style="left:485px;top:823px;letter-spacing:0.12px">=SUM(B4:B24)</div><div class="c b" style="left:737px;top:823px;letter-spacing:0.12px">=SUM(C4:C24)</div><div class="c b" style="left:989px;top:823px;letter-spacing:0.12px">=SUM(D4:D24)</div>
<div id="tabs"></div>
<div style="position:absolute;left:538px;top:899px;width:121px;height:8px;background:#fff"></div>
<div style="position:absolute;left:548px;top:899px;width:101px;height:36px;background:#fff;border-radius:0 0 6px 6px"></div>
<div style="position:absolute;left:0;top:900px;width:548px;height:40px;background:#e4e5e2;border-top-right-radius:6px"></div>
<div style="position:absolute;left:649px;top:900px;width:701px;height:40px;background:#e4e5e2;border-top-left-radius:6px"></div>
<div style="position:absolute;left:0;top:940px;width:1350px;height:2px;background:#f4f5f3"></div>
<svg style="position:absolute;left:30px;top:911px" width="12" height="16"><path d="M8.6 2 L2.6 8 L8.6 14" fill="none" stroke="#9a9a9a" stroke-width="1.3"/></svg>
<svg style="position:absolute;left:71px;top:911px" width="12" height="16"><path d="M2.4 2 L8.4 8 L2.4 14" fill="none" stroke="#9a9a9a" stroke-width="1.3"/></svg>
<div class="tab" style="left:141px;width:95px"></div>
<div style="position:absolute;left:151.65px;top:911.22px;font-size:16.94px;letter-spacing:-0.000px;line-height:20px;color:#ffffff;font-weight:400;white-space:nowrap">Summary</div>
<div class="tab" style="left:247px;width:79px"></div>
<div style="position:absolute;left:256.99px;top:910.89px;font-size:17.90px;letter-spacing:0.000px;line-height:20px;color:#ffffff;font-weight:400;white-space:nowrap">Income</div>
<div class="tab" style="left:337px;width:92px"></div>
<div style="position:absolute;left:346.79px;top:911.42px;font-size:16.38px;letter-spacing:0.000px;line-height:20px;color:#ffffff;font-weight:400;white-space:nowrap">Expenses</div>
<div class="tab" style="left:440px;width:98px"></div>
<div style="position:absolute;left:450.03px;top:911.17px;font-size:17.11px;letter-spacing:0.000px;line-height:20px;color:#ffffff;font-weight:400;white-space:nowrap">Personnel</div>
<div style="position:absolute;left:241px;top:909px;width:1px;height:22px;background:#cfcfcf"></div>
<div style="position:absolute;left:331px;top:909px;width:1px;height:22px;background:#cfcfcf"></div>
<div style="position:absolute;left:434px;top:909px;width:1px;height:22px;background:#cfcfcf"></div>
<div style="position:absolute;left:543px;top:909px;width:1px;height:22px;background:#cfcfcf"></div>
<div style="position:absolute;left:654px;top:909px;width:1px;height:22px;background:#cfcfcf"></div>
<div style="position:absolute;left:550px;top:903px;width:98px;height:31px;border-radius:5px;background:linear-gradient(#ffffff 5%,#adc8dc)"></div>
<div style="position:absolute;left:558.61px;top:907.05px;font-size:17.14px;letter-spacing:0.000px;line-height:20px;color:#2e2e2e;font-weight:700;white-space:nowrap">Operating</div>
<div style="position:absolute;left:559px;top:930px;width:80px;height:2px;background:#107c41"></div>
<svg style="position:absolute;left:706px;top:911px" width="16" height="16"><path d="M8 1 V15 M1 8 H15" stroke="#333" stroke-width="1.6"/></svg>
<svg style="position:absolute;left:1153px;top:913px" width="6" height="15"><g fill="#222"><rect x="1" y="1" width="3" height="3"/><rect x="1" y="6" width="3" height="3"/><rect x="1" y="11" width="3" height="3"/></g></svg>
<div style="position:absolute;left:1176px;top:909px;width:200px;height:21px;border-radius:10.5px;background:#f3f3f3"></div>
<svg style="position:absolute;left:1181px;top:913px" width="11" height="13"><path d="M9.5 1 V12 L1.5 6.5 Z" fill="#707070" stroke="#707070" stroke-width="1" stroke-linejoin="round"/></svg>
<div style="position:absolute;left:1197px;top:914px;width:200px;height:11px;border-radius:5.5px;background:#707070"></div>
</body></html>
